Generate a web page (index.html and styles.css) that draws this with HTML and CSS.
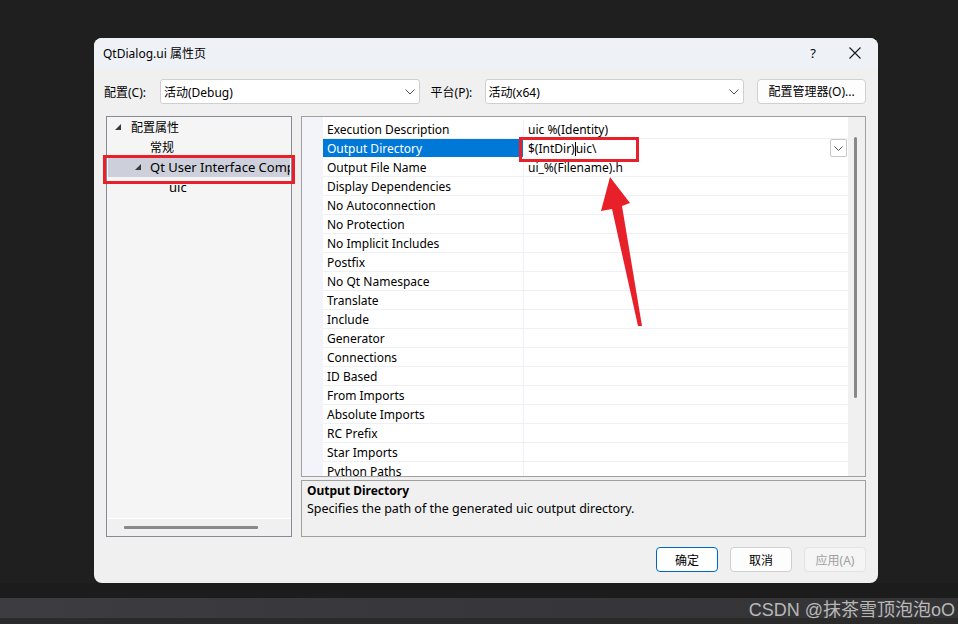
FILE: index.html
```html
<!DOCTYPE html>
<html>
<head>
<meta charset="utf-8">
<link rel="stylesheet" href="styles.css">
</head>
<body>
<div class="desktop">
  <div class="dialog">
    <div class="titlebar">
      <span class="title">QtDialog.ui 属性页</span>
      <span class="help">?</span>
      <svg class="close" width="12" height="12" viewBox="0 0 12 12"><path d="M0.5 0.5L11.5 11.5M11.5 0.5L0.5 11.5" stroke="#1a1a1a" stroke-width="1.1" fill="none"/></svg>
    </div>
    <div class="content">
      <div class="toprow">
        <span class="lbl lbl1">配置(C):</span>
        <div class="combo"><span class="combo-text">活动(Debug)</span><svg class="chev" width="10" height="6" viewBox="0 0 10 6"><path d="M0.5 0.5L5 5L9.5 0.5" stroke="#555" fill="none"/></svg></div>
        <span class="lbl lbl2">平台(P):</span>
        <div class="combo"><span class="combo-text">活动(x64)</span><svg class="chev" width="10" height="6" viewBox="0 0 10 6"><path d="M0.5 0.5L5 5L9.5 0.5" stroke="#555" fill="none"/></svg></div>
        <div class="btn mgr">配置管理器(O)...</div>
      </div>
      <div class="main">
        <div class="tree">
          <div class="tree-items">
            <div class="titem l0 cjk"><svg class="tri" width="6" height="6" viewBox="0 0 6 6"><polygon points="6,0 6,6 0,6" fill="#3a3a3a"/></svg><span class="tlabel">配置属性</span></div>
            <div class="titem l1 cjk"><span class="tlabel">常规</span></div>
            <div class="titem l1x sel"><svg class="tri" width="6" height="6" viewBox="0 0 6 6"><polygon points="6,0 6,6 0,6" fill="#3a3a3a"/></svg><span class="tlabel">Qt User Interface Compiler</span></div>
            <div class="titem l2"><span class="tlabel">uic</span></div>
          </div>
          <div class="hscroll"><div class="hthumb"></div></div>
        </div>
        <div class="right">
          <div class="grid">
            <div class="gutter"></div>
            <div class="rows">
              <div class="row"><div class="name">Execution Description</div><div class="value">uic %(Identity)</div></div>
              <div class="row selrow"><div class="name">Output Directory</div><div class="value">$(IntDir)<span class="caret"></span>uic\<div class="ddbtn"><svg width="9" height="5" viewBox="0 0 9 5"><path d="M0.5 0.5L4.5 4.5L8.5 0.5" stroke="#555" fill="none"/></svg></div></div></div>
              <div class="row"><div class="name">Output File Name</div><div class="value">ui_%(Filename).h</div></div>
              <div class="row"><div class="name">Display Dependencies</div><div class="value"></div></div>
              <div class="row"><div class="name">No Autoconnection</div><div class="value"></div></div>
              <div class="row"><div class="name">No Protection</div><div class="value"></div></div>
              <div class="row"><div class="name">No Implicit Includes</div><div class="value"></div></div>
              <div class="row"><div class="name">Postfix</div><div class="value"></div></div>
              <div class="row"><div class="name">No Qt Namespace</div><div class="value"></div></div>
              <div class="row"><div class="name">Translate</div><div class="value"></div></div>
              <div class="row"><div class="name">Include</div><div class="value"></div></div>
              <div class="row"><div class="name">Generator</div><div class="value"></div></div>
              <div class="row"><div class="name">Connections</div><div class="value"></div></div>
              <div class="row"><div class="name">ID Based</div><div class="value"></div></div>
              <div class="row"><div class="name">From Imports</div><div class="value"></div></div>
              <div class="row"><div class="name">Absolute Imports</div><div class="value"></div></div>
              <div class="row"><div class="name">RC Prefix</div><div class="value"></div></div>
              <div class="row"><div class="name">Star Imports</div><div class="value"></div></div>
              <div class="row"><div class="name">Python Paths</div><div class="value"></div></div>
            </div>
            <div class="vscroll"><div class="vthumb"></div></div>
          </div>
          <div class="desc">
            <div class="desc-title">Output Directory</div>
            <div class="desc-text">Specifies the path of the generated uic output directory.</div>
          </div>
        </div>
      </div>
      <div class="footer">
        <div class="btn fbtn primary">确定</div>
        <div class="btn fbtn">取消</div>
        <div class="btn fbtn disabled">应用(A)</div>
      </div>
    </div>
    <svg class="annot" width="784" height="545" viewBox="0 0 784 545">
      <rect x="10.5" y="118.5" width="189" height="26" fill="none" stroke="#e8202a" stroke-width="3"/>
      <rect x="426.5" y="100.5" width="117" height="22" fill="none" stroke="#e8202a" stroke-width="3"/>
      <polygon points="516,139 536,165 528,168 548,288 544,288 518,171 507,173" fill="#e8202a"/>
    </svg>
  </div>
  <div class="gap"></div>
  <div class="band"></div>
  <div class="rest"></div>
  <div class="watermark">CSDN @抹茶雪顶泡泡oO</div>
</div>
</body>
</html>
```
FILE: styles.css
```css
* { box-sizing: border-box; }
body {
  margin: 0;
  background: #1f1f1f;
  font-family: "Noto Sans", "Noto Sans CJK SC", sans-serif;
  font-size: 12px;
  color: #000;
}
.desktop {
  width: 958px;
  height: 624px;
  position: relative;
  overflow: hidden;
  background: #1f1f1f;
  display: flex;
  flex-direction: column;
}
.dialog {
  margin: 38px 0 0 94px;
  width: 784px;
  height: 545px;
  flex: none;
  background: #f0f0f0;
  border-radius: 8px;
  position: relative;
  overflow: hidden;
  display: flex;
  flex-direction: column;
}
.titlebar {
  height: 30px;
  background: #eef2f7;
  display: flex;
  align-items: center;
  padding-left: 9px;
}
.title { flex: 1; }
.help { font-size: 13px; margin-right: 33px; }
.close { margin-right: 17px; }
.content {
  flex: 1;
  padding: 11px 12px 11px 12px;
  display: flex;
  flex-direction: column;
}
.toprow {
  height: 25px;
  display: flex;
  align-items: center;
  margin-left: -2px;
}
.lbl1 { width: 56px; }
.lbl2 { width: 54px; margin-left: 11px; }
.combo {
  width: 260px;
  height: 25px;
  background: #fff;
  border: 1px solid #cfcfcf;
  border-radius: 3px;
  display: flex;
  align-items: center;
  padding: 0 0 0 3px;
}
.combo-text { flex: 1; }
.chev { margin-right: 4px; }
.btn {
  height: 25px;
  display: flex;
  align-items: center;
  justify-content: center;
  background: #fdfdfd;
  border: 1px solid #d0d0d0;
  border-radius: 4px;
}
.mgr { width: 109px; margin-left: 13px; margin-top: -1px; }
.main {
  margin-top: 12px;
  display: flex;
  gap: 9px;
  height: 421px;
}
.tree {
  width: 186px;
  border: 1px solid #858a93;
  background: #f5f5f5;
  display: flex;
  flex-direction: column;
  font-size: 13px;
}
.tree-items { flex: 1; overflow: hidden; }
.titem {
  height: 20px;
  display: flex;
  align-items: center;
  white-space: nowrap;
  overflow: hidden;
}
.cjk { font-size: 12px; }
.tri { flex: none; }
.tlabel { flex: none; }
.l0 { padding-left: 8px; }
.l0 .tlabel { margin-left: 10px; }
.l1 { padding-left: 43px; }
.l1x { padding-left: 28px; }
.l1x .tlabel { margin-left: 9px; }
.l2 { padding-left: 62px; }
.sel { background: #cdd0da; margin: 0 1px; padding-left: 27px; }
.hscroll {
  height: 18px;
  border-top: 1px solid #ffffff;
  background: #f0f0f0;
  padding: 7px 0 0 17px;
}
.hthumb { width: 134px; height: 3px; background: #888; border-radius: 1px; }
.right {
  width: 567px;
  display: flex;
  flex-direction: column;
  gap: 3px;
}
.grid {
  height: 361px;
  border: 1px solid #a0a0a0;
  background: #fff;
  display: flex;
  overflow: hidden;
}
.gutter { width: 21px; background: #f2f4f9; }
.rows { flex: 1; padding-top: 3px; }
.row {
  height: 19px;
  display: flex;
  border-bottom: 1px solid #eef0f5;
  line-height: 19px;
  white-space: nowrap;
}
.name {
  width: 201px;
  padding-left: 4px;
  border-right: 1px solid #eef0f5;
}
.value { flex: 1; padding-left: 4px; position: relative; }
.selrow { border-bottom-color: #fff; }
.selrow .name { background: #0078d7; color: #fff; border-right-color: #fff; }
.caret {
  display: inline-block;
  width: 1px;
  height: 14px;
  background: #000;
  vertical-align: -3px;
}
.ddbtn {
  position: absolute;
  right: 1px;
  top: 0;
  width: 17px;
  height: 18px;
  background: #fff;
  border: 1px solid #c8c8c8;
  border-radius: 2px;
  display: flex;
  align-items: center;
  justify-content: center;
}
.vscroll { width: 17px; background: #f0f0f0; padding: 20px 0 0 6px; }
.vthumb { width: 3px; height: 261px; background: #888; border-radius: 2px; }
.desc {
  flex: 1;
  border: 1px solid #a0a0a0;
  background: #f0f0f0;
  padding: 1px 5px;
  line-height: 18px;
}
.desc-title { font-weight: bold; }
.desc-text { font-size: 12.5px; }
.footer {
  margin-top: 10px;
  display: flex;
  justify-content: flex-end;
  gap: 12px;
}
.fbtn { width: 62px; }
.primary { border-color: #0067c0; background: #fff; }
.disabled { color: #a0a0a0; background: #f5f5f5; border-color: #e3e3e3; }
.annot { position: absolute; left: 0; top: 0; pointer-events: none; }
.gap { height: 15px; flex: none; background: #1c1c1c; }
.band { height: 20px; flex: none; background: linear-gradient(90deg, #3d3c41, #37373b 50%, #343436); }
.rest { flex: 1; background: #2a2a2a; }
.watermark {
  position: absolute;
  right: 3px;
  top: 595px;
  font-family: "Liberation Sans", "Noto Sans CJK SC", sans-serif;
  font-size: 18px;
  color: #b8b8b8;
  white-space: nowrap;
}
```
